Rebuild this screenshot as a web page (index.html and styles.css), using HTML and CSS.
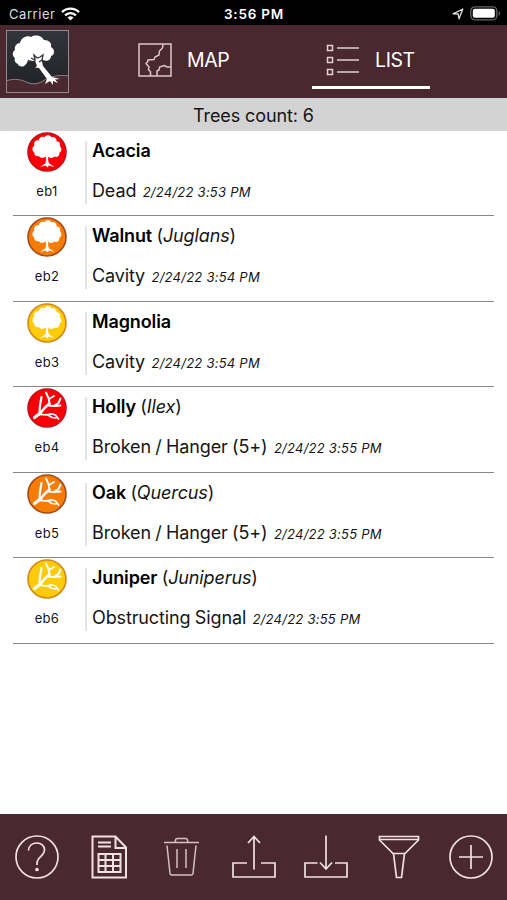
FILE: index.html
```
<!DOCTYPE html>
<html lang="en">

<head>
    <meta charset="UTF-8">
    <meta name="viewport" content="width=device-width, initial-scale=1.0">
    <link rel="stylesheet" href="styles.css">
    <title>Trees list</title>
</head>

<body>
    <!-- shared icons for the list -->
    <svg class="sprite" width="0" height="0">
        <symbol id="tree" viewBox="0 0 40 40">
            <circle cx="20" cy="20" r="19" fill="currentColor" stroke="var(--ring)" stroke-width="1.6" />
            <path fill="#fff" d="M18.600 33.500l-5.600 1.500 5.200-3.500c.9-1.800 1-4.500.5-7-2.500 2-5.200 1.800-6.700-.3-3.200.5-5-1.200-4.700-3.700-2.700-1.900-2.300-5.500.2-6.700-1.200-3.300 1-6 4.300-5.400C12 5.400 15 4 17.500 5.200c1.700-2.500 5.300-2.500 6.800.1 3.100-.8 5.500 1.200 5.300 4 2.900.2 4.400 2.700 3.300 5 2.200 2 1.900 5.300-.5 6.400.4 3.100-2 4.900-4.900 3.900-1.600 1.900-4.200 1.900-6.200-.1-.4 2.500-.2 5.300.9 7l5.300 3.500-5.600-1.500-1.400 2z" />
        </symbol>
        <symbol id="branch" viewBox="0 0 40 40">
            <circle cx="20" cy="20" r="19" fill="currentColor" stroke="var(--ring)" stroke-width="1.6" />
            <g fill="none" stroke="#fff" stroke-linecap="round" stroke-linejoin="round">
                <path stroke-width="3.200" d="M7.500 29.500l6-4.500" />
                <path stroke-width="2.500" d="M13.500 25l4-5 5-4.500" />
                <path stroke-width="2.200" d="M12.500 24.500l.5-7L14.500 9" />
                <path stroke-width="1.900" d="M22.500 15.500l-.8-5L19 4.500M22 11l5-3M21.500 17.500l5 .5 5-3 2-4.500M27.500 18l6-.5" />
                <path stroke-width="1.700" d="M12.500 26.500l7 .3 5-1 4 1.200 3 4M21 27l4 2.500 4 .5" />
            </g>
        </symbol>
    </svg>

    <div class="statusBar">
        <div class="statusBar_carrier">
            <span>Carrier</span>
            <svg width="19" height="14" viewBox="0 0 19 14" fill="none" stroke="#fff" stroke-width="2.4">
                <path d="M1 5.2a12 12 0 0 1 17 0M4.1 8.4a7.6 7.6 0 0 1 10.8 0" />
                <path fill="#fff" stroke="none" d="M9.5 13.6L6.5 10.6a4.3 4.3 0 0 1 6 0z" />
            </svg>
        </div>
        <div class="statusBar_time">3:56 PM</div>
        <div class="statusBar_right">
            <svg width="12" height="12" viewBox="0 0 12 12" fill="none" stroke="#ddd" stroke-width="1.3" stroke-linejoin="round">
                <path d="M1 5.8L10.8 1 7 10.8 6.2 6z" />
            </svg>
            <svg width="31" height="15" viewBox="0 0 31 15">
                <rect x=".8" y=".8" width="26" height="13" rx="4" fill="none" stroke="#666" stroke-width="1.3" />
                <rect x="2.8" y="2.8" width="22" height="9" rx="2" fill="#fff" />
                <path fill="#666" d="M28.6 5c2 .8 2 4 0 4.8z" />
            </svg>
        </div>
    </div>

    <header class="header">
        <svg class="logo" width="63" height="63" viewBox="0 0 63 63">
            <defs>
                <linearGradient id="night" x2="0" y2="1">
                    <stop offset="0" stop-color="#34353c" />
                    <stop offset="1" stop-color="#202126" />
                </linearGradient>
            </defs>
            <rect width="63" height="63" fill="url(#night)" />
            <path fill="#4a282f" stroke="#8d7f82" stroke-width="1" d="M0 51c8-3 15-1.500 20 1s11 2.500 16-.5c8-5 16-7 27-5.500V63H0z" />
            <!-- crown -->
            <path fill="#fff" d="M12 34c-3-1-4-4-3-6-3-2-3-6 0-8-1-4 2-7 5-7 1-5 7-8 11-6 5-3 11-1 13 3 5 0 8 3 7 7 4 2 4 8 0 9 0 4-4 6-8 4l-5-1-5 2-5-1c-1 4-4 8-8 6-1 0-2-1-2-2z" />
            <!-- trunk and roots -->
            <path fill="#fff" d="M28 28l7-1 2 9 9 11 8 2-5 .5 3 3.500-5-2 0 4-3-4-5 3 2-5-8-11-4-.5 2-1.500z" />
            <path fill="none" stroke="#33343a" stroke-width="1.300" d="M25 28l4 2-1-5 3 3 3-1 3-2-1 5-3 2" />
            <rect x=".5" y=".5" width="62" height="62" fill="none" stroke="#918a8d" />
        </svg>
        <nav class="tabs">
            <a class="tab">
                <svg width="34" height="34" viewBox="0 0 34 34" fill="none" stroke="#d9c8cb" stroke-width="1.500">
                    <rect x="1" y="1" width="32" height="32" />
                    <path d="M25 1l-.5 4-3 3-.5 4-4 2-1 2.500-6 .5-.5 2-1.500 1.500 3 3.500-.5 3 2 1.500V33M19 33v-5l2-1 .5-3 5-1.500 2.500 1.500h4" />
                </svg>
                <span>MAP</span>
            </a>
            <a class="tab tab-active">
                <svg width="34" height="34" viewBox="0 0 34 34" fill="none" stroke="#e0d0d3" stroke-width="1.500">
                    <path d="M1.500 2.500h5v5h-5zM1.500 14.500h5v5h-5zM1.500 26.500h5v5h-5zM11 5h22M11 17h22M11 29h22" />
                </svg>
                <span>LIST</span>
            </a>
        </nav>
    </header>

    <div class="count">Trees count: 6</div>

    <main>
        <ul class="treeList">
            <li class="treeItem">
                <div class="treeItem_icon">
                    <svg class="red"><use href="#tree" /></svg>
                    <span>eb1</span>
                </div>
                <div class="treeItem_info">
                    <p><b>Acacia</b></p>
                    <p>Dead <time>2/24/22 3:53 PM</time></p>
                </div>
            </li>
            <li class="treeItem">
                <div class="treeItem_icon">
                    <svg class="orange"><use href="#tree" /></svg>
                    <span>eb2</span>
                </div>
                <div class="treeItem_info">
                    <p><b>Walnut</b> (<i>Juglans</i>)</p>
                    <p>Cavity <time>2/24/22 3:54 PM</time></p>
                </div>
            </li>
            <li class="treeItem">
                <div class="treeItem_icon">
                    <svg class="yellow"><use href="#tree" /></svg>
                    <span>eb3</span>
                </div>
                <div class="treeItem_info">
                    <p><b>Magnolia</b></p>
                    <p>Cavity <time>2/24/22 3:54 PM</time></p>
                </div>
            </li>
            <li class="treeItem">
                <div class="treeItem_icon">
                    <svg class="red"><use href="#branch" /></svg>
                    <span>eb4</span>
                </div>
                <div class="treeItem_info">
                    <p><b>Holly</b> (<i>Ilex</i>)</p>
                    <p>Broken / Hanger (5+) <time>2/24/22 3:55 PM</time></p>
                </div>
            </li>
            <li class="treeItem">
                <div class="treeItem_icon">
                    <svg class="orange"><use href="#branch" /></svg>
                    <span>eb5</span>
                </div>
                <div class="treeItem_info">
                    <p><b>Oak</b> (<i>Quercus</i>)</p>
                    <p>Broken / Hanger (5+) <time>2/24/22 3:55 PM</time></p>
                </div>
            </li>
            <li class="treeItem">
                <div class="treeItem_icon">
                    <svg class="yellow"><use href="#branch" /></svg>
                    <span>eb6</span>
                </div>
                <div class="treeItem_info">
                    <p><b>Juniper</b> (<i>Juniperus</i>)</p>
                    <p>Obstructing Signal <time>2/24/22 3:55 PM</time></p>
                </div>
            </li>
        </ul>
    </main>

    <footer class="toolbar">
        <!-- help -->
        <svg viewBox="0 0 44 44">
            <circle cx="22" cy="22" r="21" />
            <path d="M13.500 15.500c.3-5 4-7.500 8.300-7.500 4.500 0 7.700 3 7.700 6.800 0 6.200-7.500 7.200-7.500 13.200v2" />
            <circle cx="22" cy="34.500" r="1" fill="#f0e2e4" />
        </svg>
        <!-- report -->
        <svg viewBox="0 0 44 44">
            <path stroke-width="2" d="M5.500 1.500h23L39 12.500V42.500H5.500zM28.500 1.500v11.500H39" />
            <path stroke-width="2" d="M11 7.500h13M11 11.500h13M11.500 19h22v18h-22zM11.500 25h22M11.500 31h22M18.500 19v18M26 19v18" />
        </svg>
        <!-- trash -->
        <svg class="thin" viewBox="0 0 44 44">
            <path d="M4 7.500h35M7 10.500l3 28c.1 1 .8 1.500 1.800 1.500h19.400c1 0 1.700-.5 1.800-1.500l3-28M15 7.500l.7-3c.2-.7.700-1 1.300-1h9c.6 0 1.100.3 1.300 1l.7 3M17 14v19M26 14v19" />
        </svg>
        <!-- upload -->
        <svg viewBox="0 0 44 44">
            <path d="M15 28H1v14h42V28H29M22 34.500V1.500M16 8l6-6.500L28 8" />
        </svg>
        <!-- download -->
        <svg viewBox="0 0 44 44">
            <path d="M13.500 28H1v14h42V28H31M22 .5v33.500M16 27.500l6 6.500 6-6.500" />
        </svg>
        <!-- filter -->
        <svg viewBox="0 0 44 44">
            <path d="M2.500 1.500h39v3.500L28 18.500H16L2.500 5zM2.500 4.500h39M16.500 18.500L19.500 42.500h5L27.500 18.500" />
        </svg>
        <!-- add -->
        <svg viewBox="0 0 44 44">
            <circle cx="22" cy="22" r="21" />
            <path d="M22 10v24M10 22h24" />
        </svg>
    </footer>
</body>

</html>
```
FILE: styles.css
```
body,
p,
ul,
li {
    margin: 0;
    padding: 0;
}

body {
    display: flex;
    flex-direction: column;
    height: 900px;
    overflow: hidden;
    background-color: #fff;
    color: #151515;
    font-family: 'Inter', sans-serif;
}

.sprite {
    position: absolute;
}

/* Status bar */
.statusBar {
    display: grid;
    grid-template-columns: 1fr auto 1fr;
    align-items: center;
    box-sizing: border-box;
    height: 25px;
    padding: 2px 6px 0 9px;
    background-color: #000;
    color: #fff;
    font-size: 13px;
}

.statusBar_carrier,
.statusBar_right {
    display: flex;
    align-items: center;
}

.statusBar_carrier {
    gap: 6px;
    color: #ddd;
    letter-spacing: 0.55px;
}

.statusBar_time {
    margin-right: 2px;
    font-size: 13.5px;
    font-weight: 600;
    letter-spacing: 0.8px;
}

.statusBar_right {
    justify-content: flex-end;
    gap: 6px;
}

/* Header */
.header {
    display: flex;
    box-sizing: border-box;
    height: 73px;
    padding: 5px 6px 0;
    background-color: #4a282f;
}

.tabs {
    display: flex;
    gap: 58px;
    margin-left: 55px;
}

.tab {
    display: flex;
    align-items: center;
    box-sizing: border-box;
    width: 130px;
    height: 59px;
    padding: 4px 0 0 14px;
    gap: 15px;
    border-bottom: 3px solid transparent;
    color: #fff;
    font-size: 19.5px;
    letter-spacing: -0.4px;
}

.tab-active {
    width: 118px;
    border-bottom-color: #fff;
}

.count {
    height: 33px;
    background-color: #d3d3d3;
    font-size: 18px;
    line-height: 36px;
    letter-spacing: -0.1px;
    text-align: center;
}

/* Tree list */
main {
    flex: 1;
}

.treeList {
    padding: 0 13px;
    list-style: none;
}

.treeItem {
    display: flex;
    box-sizing: border-box;
    height: 85.5px;
    border-bottom: 1px solid #888;
}

.treeItem:first-child {
    height: 85px;
}

.treeItem_icon {
    display: flex;
    flex-direction: column;
    align-items: center;
    width: 68px;
    font-size: 13px;
    letter-spacing: 0.3px;
}

.treeItem_icon svg {
    width: 40px;
    height: 40px;
    margin-top: 1px;
}

.treeItem_icon span {
    margin-top: 11px;
}

.red {
    color: #fb0007;
    --ring: #c51018;
}

.orange {
    color: #f77c05;
    --ring: #a34b18;
}

.yellow {
    color: #fdcb08;
    --ring: #d38a1c;
}

.treeItem_info {
    height: 63px;
    margin: 10px 0 0 4px;
    padding-left: 5px;
    border-left: 2px solid #e3e3e3;
    font-size: 18px;
    line-height: 40px;
    letter-spacing: -0.12px;
    word-spacing: -0.6px;
}

.treeItem_info p:first-child {
    margin-top: -10px;
}

.treeItem_info b {
    color: #000;
    font-weight: 600;
}

.treeItem_info time {
    margin-left: 2px;
    font-size: 13px;
    font-style: italic;
    letter-spacing: 0.25px;
    word-spacing: 0;
}

/* Bottom toolbar */
.toolbar {
    display: flex;
    justify-content: space-between;
    box-sizing: border-box;
    height: 86px;
    padding: 21px 14px 0 15px;
    background-color: #4a282f;
}

.toolbar svg {
    width: 44px;
    height: 44px;
    fill: none;
    stroke: #f0e2e4;
    stroke-width: 1.7;
}

.toolbar .thin {
    stroke: #d4c0c4;
    stroke-width: 1.5;
}
```
